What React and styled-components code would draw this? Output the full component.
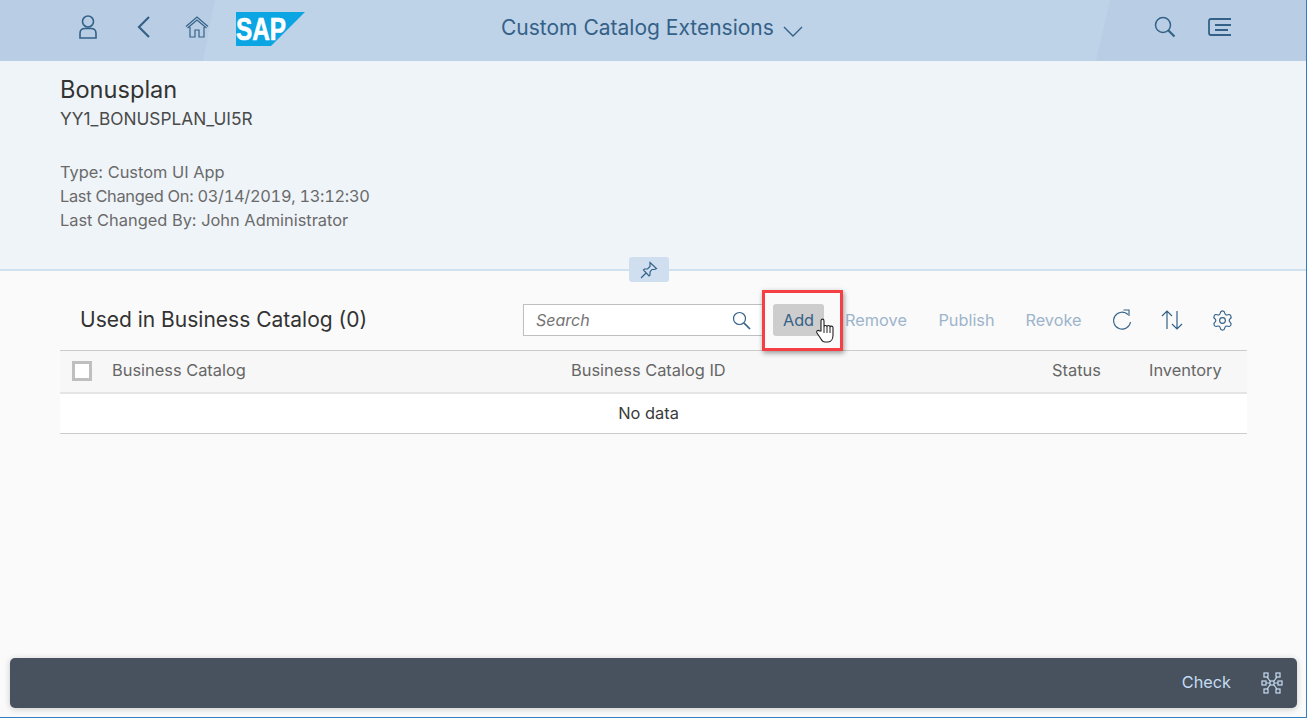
import React from "react";
import styled, { createGlobalStyle } from "styled-components";
import { Settings } from "lucide-react";

const Global = createGlobalStyle`
  html, body { margin: 0; padding: 0; background: #fafafa; }
  * { box-sizing: border-box; }
  body { font-family: "Inter", "Noto Sans", "Liberation Sans", sans-serif; }
`;

const Page = styled.div`
  width: 1307px; height: 718px; display: flex; flex-direction: column;
  background: #fafafa; border-right: 1px solid #2f7fc1; border-bottom: 1px solid #2f7fc1;
  overflow: hidden;
`;
const Shell = styled.header`
  position: relative; height: 61px; flex: none; display: flex; align-items: center;
  padding: 0 68px 7px 70px; background: #b9cee5; color: #346187;
  &::before { content: ""; position: absolute; inset: 0; background: #bed2e8;
    clip-path: polygon(215px 0, 1110px 0, 1096px 100%, 203px 100%); }
  > * { position: relative; }
`;
const ShellIcon = styled.button`
  width: 36px; height: 36px; padding: 0; border: 0; background: none; color: inherit;
  display: flex; align-items: center; justify-content: center; margin-right: ${p => p.$gap || 0}px;
`;
const Logo = styled.svg` width: 69px; height: 34px; display: block; margin-top: 3px; margin-left: 7px; `;
const ShellTitle = styled.div`
  position: absolute; left: 501px; top: 14px; display: flex; align-items: center; gap: 9px;
  font-size: 21px; line-height: 27px; white-space: nowrap;
`;
const ChevronIcon = styled.svg` margin-top: 6px; `;
const ShellRight = styled.div` margin-left: auto; display: flex; gap: 19px; `;

const ObjectHeader = styled.section`
  position: relative; height: 210px; flex: none; padding: 14px 60px 0;
  background: #eff4f9; border-bottom: 2px solid #cfe0f1;
`;
const Title = styled.h1` margin: 0; font-size: 23.6px; line-height: 30px; font-weight: 400; color: #333; `;
const SubTitle = styled.div` font-size: 17.3px; line-height: 22px; color: #4a4a4a; margin-top: 3px; `;
const Meta = styled.div` margin-top: 30px; font-size: 16.400px; line-height: 24px; color: #6a6a6a; `;
const MetaDate = styled.div` font-variant-numeric: tabular-nums; letter-spacing: -.3px; `;
const PinButton = styled.div`
  position: absolute; left: 629px; bottom: -13px; width: 40px; height: 25px; border-radius: 3px;
  background: #cfdff0; color: #346187; display: flex; align-items: center; justify-content: center;
`;

const Content = styled.main` flex: 1; padding: 33px 59px 0 60px; min-height: 0; `;
const Toolbar = styled.div` display: flex; align-items: center; height: 32px; margin-bottom: 14px; padding-right: 13px; position: relative; `;
const TableTitle = styled.h2` margin: -2px 0 0 20px; font-size: 21px; font-weight: 400; color: #333; white-space: nowrap; `;
const SearchBox = styled.div`
  margin-left: auto; width: 240px; height: 32px; border: 1px solid #bfbfbf; background: #fff;
  display: flex; align-items: center; justify-content: space-between; padding: 0 11px 0 12px;
  font-style: italic; font-size: 16px; color: #757575;
`;
const SearchIcon = styled.svg` color: #346187; `;
const TextButton = styled.button`
  height: 32px; width: ${p => p.$w}px; margin-left: ${p => p.$ml}px; padding: 0; border: 0; border-radius: 3px;
  font: inherit; font-size: 16.3px; white-space: nowrap;
  background: ${p => (p.$active ? "#cdcdcd" : "transparent")};
  color: ${p => (p.$active ? "#346187" : "#9db4cb")};
`;
const ToolIcon = styled.div`
  width: 24px; height: 32px; display: flex; align-items: center; justify-content: center;
  margin-left: ${p => p.$ml}px; color: #346187;
`;
const Highlight = styled.div`
  position: absolute; left: 702px; top: -14px; width: 81px; height: 61px;
  border: 3px solid #f44044; box-shadow: 1px 2px 5px rgba(0,0,0,.4); pointer-events: none;
`;
const Cursor = styled.svg` position: absolute; left: 756px; top: 14px; width: 18px; height: 25px; `;

const Row = styled.div`
  display: grid; grid-template-columns: 52px 459px 1fr 97px 98px; align-items: center;
  font-size: 16.400px; color: #666;
`;
const HeadRow = styled(Row)`
  height: 44px; background: #f7f7f7; border-top: 1px solid #ccc; border-bottom: 2px solid #e5e5e5;
  white-space: nowrap;
  > span { margin-top: -3px; }
`;
const Check = styled.div` width: 20px; height: 20px; margin: -2px 0 0 12px; border: 3px solid #bfbfbf; background: #fff; `;
const EmptyRow = styled.div`
  height: 40px; background: #fff; border-bottom: 1px solid #ccc; display: flex; padding: 0 10px 2px 0;
  align-items: center; justify-content: center; font-size: 16.400px; color: #3a3a3a;
`;

const Footer = styled.footer`
  flex: none; height: 50px; margin: 0 9px 9px 10px; background: #47525e; border-radius: 5px;
  box-shadow: 0 1px 6px rgba(0,0,0,.2); display: flex; align-items: center; justify-content: flex-end;
  padding: 0 14px 0 0; gap: 30px; color: #c5dcf2; font-size: 16.300px;
`;
const FooterLabel = styled.span` margin-top: -2px; `;

const stroke = { fill: "none", stroke: "currentColor", strokeWidth: 1.6 };

const App = () => (
  <>
    <Global />
    <Page>
      <Shell>
        <ShellIcon $gap={20}>
          <svg width="18" height="24" viewBox="0 0 18 24" {...stroke}><circle cx="9" cy="6.500" r="5.500" /><path d="M1 23v-4.500c0-3 2-5 5-5h6c3 0 5 2 5 5V23zM1 23h16" /></svg>
        </ShellIcon>
        <ShellIcon $gap={17}>
          <svg width="14" height="24" viewBox="0 0 14 24" fill="none" stroke="currentColor" strokeWidth="2.200"><path d="M12 2 2 12l10 10" /></svg>
        </ShellIcon>
        <ShellIcon $gap={14}>
          <svg width="24" height="22" viewBox="0 0 24 22" {...stroke} strokeWidth="1.200"><path d="M1 10.500 12 1l11 9.500M2.500 12 12 4l9.500 8M5 11v10h5v-7h4v7h5V11" /></svg>
        </ShellIcon>
        <Logo viewBox="0 0 69 34">
          <path d="M0 0h69L35 34H0z" fill="#0aa5e2" />
          <text x="0" y="28" fontFamily="Liberation Sans" fontWeight="700" fontSize="31" fill="#fff" stroke="#fff" strokeWidth=".7" textLength="50" lengthAdjust="spacingAndGlyphs">SAP</text>
        </Logo>
        <ShellTitle>
          Custom Catalog Extensions
          <ChevronIcon width="20" height="12" viewBox="0 0 20 12" fill="none" stroke="currentColor" strokeWidth="1.400"><path d="m1 2 9 9 9-9" /></ChevronIcon>
        </ShellTitle>
        <ShellRight>
          <ShellIcon>
            <svg width="22" height="22" viewBox="0 0 22 22" fill="none" stroke="currentColor"><circle cx="9" cy="9" r="7.500" strokeWidth="1.500" /><path d="m14 14 6.500 6.500" strokeWidth="2.200" /></svg>
          </ShellIcon>
          <ShellIcon>
            <svg width="24" height="20" viewBox="0 0 24 20" fill="none" stroke="currentColor" strokeWidth="1.800"><path d="M23 2H3Q1 2 1 4v12q0 2 2 2h20M7 8h16M7 13h13" /></svg>
          </ShellIcon>
        </ShellRight>
      </Shell>
      <ObjectHeader>
        <Title>Bonusplan</Title>
        <SubTitle>YY1_BONUSPLAN_UI5R</SubTitle>
        <Meta>
          <div>Type: Custom UI App</div>
          <MetaDate>Last Changed On: 03/14/2019, 13:12:30</MetaDate>
          <div>Last Changed By: John Administrator</div>
        </Meta>
        <PinButton>
          <svg width="18" height="18" viewBox="0 0 18 18" fill="none" stroke="currentColor" strokeWidth="1.200"><path d="M1 17l5-5M10 1.500l6.500 6-2 1-2.500 0-2 2.500 0 3-1 1L3.500 9l1-1 3 0L10 5.500 10 3z" /></svg>
        </PinButton>
      </ObjectHeader>
      <Content>
        <Toolbar>
          <TableTitle>Used in Business Catalog (0)</TableTitle>
          <SearchBox>
            Search
            <SearchIcon width="19" height="19" viewBox="0 0 19 19" fill="none" stroke="currentColor"><circle cx="7.500" cy="7.500" r="6" strokeWidth="1.200" /><path d="m12 12 6 6" strokeWidth="1.700" /></SearchIcon>
          </SearchBox>
          <TextButton $w={51} $ml={10} $active>Add</TextButton>
          <TextButton $w={62} $ml={21}>Remove</TextButton>
          <TextButton $w={57} $ml={31}>Publish</TextButton>
          <TextButton $w={57} $ml={30}>Revoke</TextButton>
          <ToolIcon $ml={28}>
            <svg width="20" height="22" viewBox="0 0 20 22" fill="none" stroke="currentColor" strokeWidth="1.100"><path d="M16 5.500A8.500 8.500 0 1 0 18.500 13M11.500 1h5.500v6" /></svg>
          </ToolIcon>
          <ToolIcon $ml={26}>
            <svg width="24" height="22" viewBox="0 0 24 22" fill="none" stroke="currentColor" strokeWidth="1.200"><path d="M7 20V2M2 7l5-5 5 5M17 2v18M12 15l5 5 5-5" /></svg>
          </ToolIcon>
          <ToolIcon $ml={26}>
            <Settings size={23} strokeWidth={1.200} />
          </ToolIcon>
          <Highlight />
          <Cursor viewBox="0 0 18 25">
            <path d="M5 13V3c0-2.500 3-2.500 3 0v6c0-2 3-2 3 0 0-2 3-2 3 0 .5-1.500 3-1 3 .5V17c0 4-2 7-5 7H9c-2 0-3-1-4-3l-4-6c-1-2 1-3.500 2.500-2z" fill="#fff" stroke="#222" strokeWidth="1.100" />
            <path d="M8 9v6M11 9v6M14 9v6" stroke="#222" strokeWidth="1" />
          </Cursor>
        </Toolbar>
        <HeadRow>
          <Check />
          <span>Business Catalog</span>
          <span>Business Catalog ID</span>
          <span>Status</span>
          <span>Inventory</span>
        </HeadRow>
        <EmptyRow>No data</EmptyRow>
      </Content>
      <Footer>
        <FooterLabel>Check</FooterLabel>
        <svg width="22" height="22" viewBox="0 0 22 22" fill="none" stroke="currentColor" strokeWidth="1.200"><rect x="3" y="1" width="4" height="4" /><rect x="15" y="1" width="4" height="4" /><rect x="1" y="9" width="4" height="4" /><rect x="17" y="9" width="4" height="4" /><rect x="3" y="17" width="4" height="4" /><rect x="15" y="17" width="4" height="4" /><rect x="9" y="9" width="4" height="4" /><path d="M6 5l3 4M16 5l-3 4M5 11h4M13 11h4M6 17l3-4M16 17l-3-4" /></svg>
      </Footer>
    </Page>
  </>
);

export default App;
